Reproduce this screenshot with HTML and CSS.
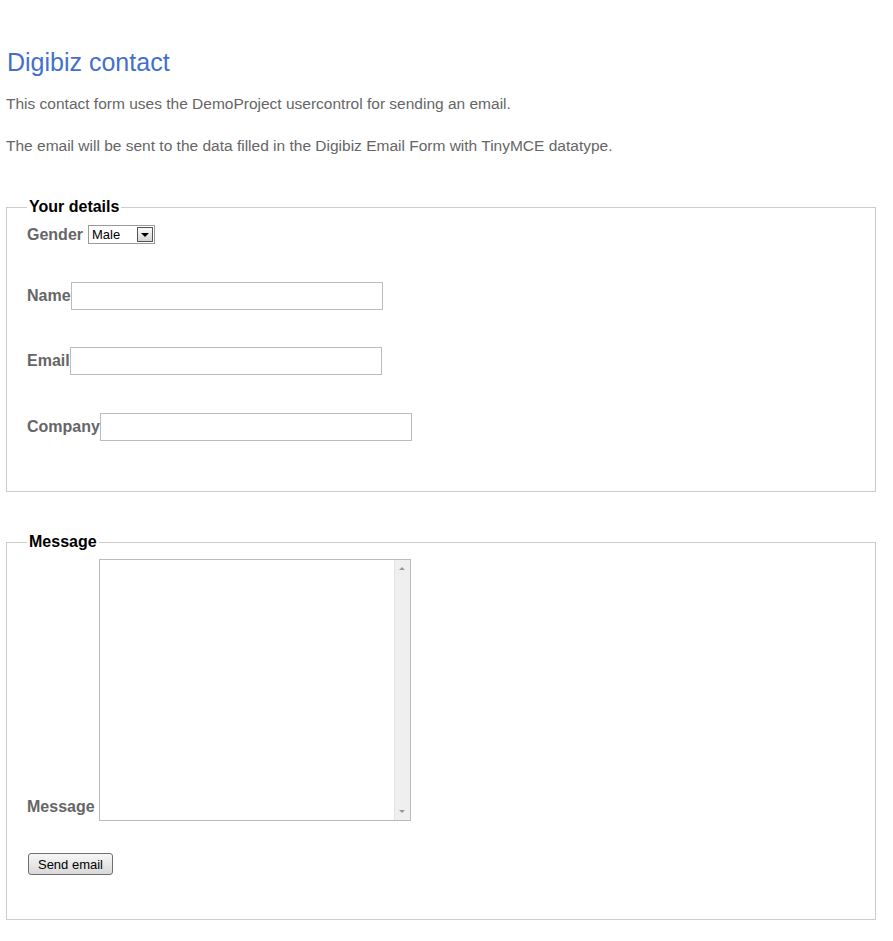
FILE: index.html
```html
<!DOCTYPE html>
<html lang="en">
<head>
  <meta charset="UTF-8" />
  <title>Digibiz contact</title>
  <link rel="stylesheet" href="styles.css">
</head>
<body>

  <div class="page">
    <h1>Digibiz contact</h1>
    <p class="intro">This contact form uses the DemoProject usercontrol for sending an email.</p>
    <p class="intro second">The email will be sent to the data filled in the Digibiz Email Form with TinyMCE datatype.</p>

    <fieldset class="details">
      <legend>Your details</legend>
      <div class="row gender-row">
        <label for="gender">Gender</label>
        <span class="select-wrap">
          <select id="gender">
            <option>Male</option>
            <option>Female</option>
          </select>
          <span class="select-arrow"></span>
        </span>
      </div>
      <div class="row">
        <label for="name">Name</label>
        <input type="text" id="name" />
      </div>
      <div class="row email-row">
        <label for="email">Email</label>
        <input type="text" id="email" />
      </div>
      <div class="row">
        <label for="company">Company</label>
        <input type="text" id="company" />
      </div>
    </fieldset>

    <fieldset class="message">
      <legend>Message</legend>
      <div class="row message-row">
        <label for="message">Message</label>
        <span class="textarea-wrap">
          <textarea id="message"></textarea>
          <span class="fake-scroll">
            <span class="arrow-up"></span>
            <span class="arrow-down"></span>
          </span>
        </span>
      </div>
      <button type="button">Send email</button>
    </fieldset>
  </div>

</body>
</html>
```

FILE: styles.css
```css
body {
  margin: 0;
  font-family: 'Liberation Sans', Arial, sans-serif;
  background: #fff;
}

.page {
  width: 870px;
  margin-left: 6px;
  padding-top: 47px;
  padding-bottom: 21px;
}

h1 {
  margin: 0 0 0 1px;
  font-size: 25px;
  line-height: 30px;
  font-weight: normal;
  color: #4470cc;
}

.intro {
  margin: 18px 0 0 0;
  font-size: 15.5px;
  line-height: 18px;
  color: #666;
}

.intro.second {
  margin-top: 24px;
}

fieldset {
  margin: 43px 0 0 0;
  padding: 9px 20px 50px 20px;
  border: 1px solid #ccc;
}

legend {
  padding: 0 2px;
  font-size: 16px;
  line-height: 18px;
  font-weight: bold;
  color: #000;
}

.row {
  display: flex;
  align-items: center;
  margin-bottom: 37px;
}

.row:last-child {
  margin-bottom: 0;
}

label {
  font-size: 16px;
  font-weight: bold;
  color: #666;
}

input[type=text] {
  box-sizing: border-box;
  width: 312px;
  height: 28px;
  margin: 0;
  padding: 2px 4px;
  border: 1px solid #bbb;
  font-family: inherit;
  font-size: 13px;
}

.gender-row {
  margin-bottom: 38px;
}

.email-row {
  margin-bottom: 38px;
}

.select-wrap {
  position: relative;
  display: inline-block;
  margin-left: 5px;
}

select {
  appearance: none;
  -webkit-appearance: none;
  box-sizing: border-box;
  display: block;
  width: 67px;
  height: 19px;
  margin: 0;
  padding: 0 0 0 3px;
  border: 1px solid #999;
  border-radius: 0;
  background: #fff;
  font-family: inherit;
  font-size: 13px;
  color: #000;
}

.select-arrow {
  position: absolute;
  right: 2px;
  top: 2px;
  width: 14px;
  height: 13px;
  border: 1px solid #555;
  background: linear-gradient(#fafafa, #d6d6d6);
  pointer-events: none;
}

.select-arrow::after {
  content: "";
  position: absolute;
  left: 3px;
  top: 5px;
  border-left: 4px solid transparent;
  border-right: 4px solid transparent;
  border-top: 4px solid #000;
}

.message {
  margin-top: 41px;
  padding-top: 8px;
  padding-bottom: 44px;
}

.message-row {
  align-items: flex-end;
  margin-bottom: 32px;
}

.message-row label {
  margin-right: 4px;
  margin-bottom: 5px;
}

.textarea-wrap {
  position: relative;
  display: inline-block;
}

textarea {
  box-sizing: border-box;
  display: block;
  width: 312px;
  height: 262px;
  margin: 0;
  padding: 2px;
  border: 1px solid #bbb;
  resize: none;
  overflow: hidden;
  font-family: inherit;
  font-size: 13px;
}

.fake-scroll {
  position: absolute;
  right: 1px;
  top: 1px;
  bottom: 1px;
  width: 15px;
  background: #efefef;
  border-left: 1px solid #e4e4e4;
}

.arrow-up,
.arrow-down {
  position: absolute;
  left: 4px;
  border-left: 3px solid transparent;
  border-right: 3px solid transparent;
}

.arrow-up {
  top: 7px;
  border-bottom: 3px solid #999;
}

.arrow-down {
  bottom: 7px;
  border-top: 3px solid #999;
}

button {
  display: block;
  box-sizing: border-box;
  width: 85px;
  height: 22px;
  margin: 0 0 0 1px;
  padding: 0;
  border: 1px solid #707070;
  border-radius: 3px;
  background: linear-gradient(#f6f6f6 0%, #e8e8e8 50%, #d8d8d8 100%);
  font-family: inherit;
  font-size: 13px;
  color: #000;
}
```
